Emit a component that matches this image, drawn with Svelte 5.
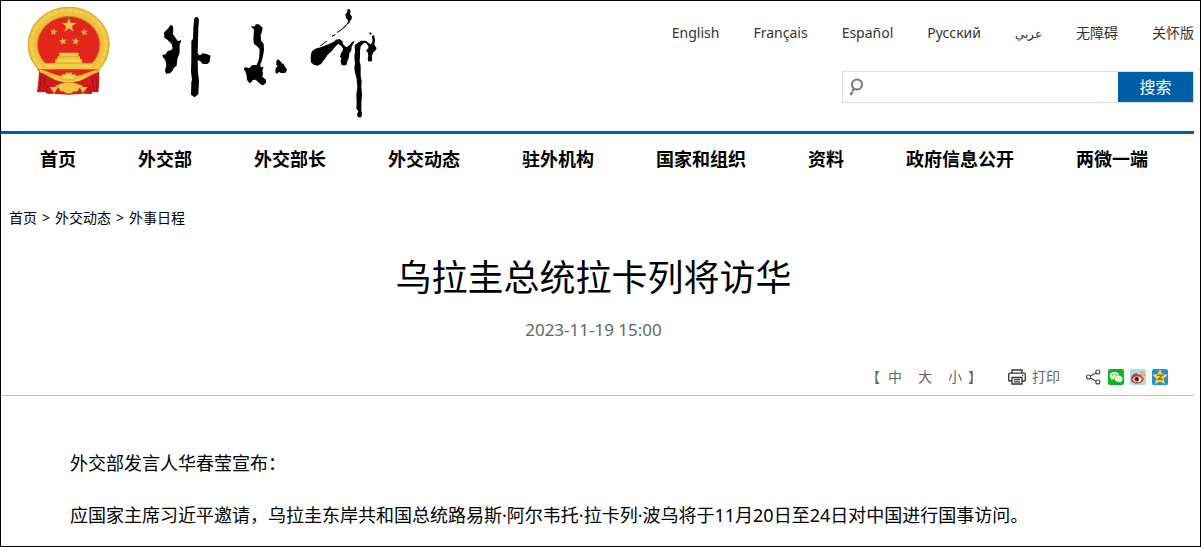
<script>
  const languages = [
    { label: 'English', lang: 'en' },
    { label: 'Français', lang: 'fr' },
    { label: 'Español', lang: 'es' },
    { label: 'Русский', lang: 'ru' },
    { label: 'عربي', lang: 'ar' },
    { label: '无障碍', lang: 'zh' },
    { label: '关怀版', lang: 'zh' }
  ];
  const sections = ['首页', '外交部', '外交部长', '外交动态', '驻外机构', '国家和组织', '资料', '政府信息公开', '两微一端'];
  const trail = ['首页', '外交动态', '外事日程'];
  const sizes = ['中', '大', '小'];
  const star = '0,-10 2.4,-3.2 9.5,-3.1 3.8,1.3 5.9,8.1 0,4 -5.9,8.1 -3.8,1.3 -9.5,-3.1 -2.4,-3.2';
</script>

<div class="page">
  <header>
    <a class="brand" href="#home" aria-label="外交部">
      <svg class="emblem" viewBox="78 18 255 267" aria-hidden="true">
        <path d="M118 205 C120 235 112 258 111 277 L135 276 L143 282 L160 281 L206 284 L250 281 L275 282 L277 276 L295 277 C297 258 299 240 297 205 Z" fill="#d3191b" />
        <path d="M122 225 L119 274 M132 230 L129 274 M145 236 L139 278 M153 240 L151 268 M290 225 L291 274 M280 230 L282 274 M268 236 L271 278 M259 240 L261 268" stroke="#9a1013" stroke-width="3" fill="none" />
        <ellipse cx="206" cy="134" rx="108" ry="99" fill="#e4251c" stroke="#ecbf3d" stroke-width="30" />
        <ellipse cx="206" cy="134" rx="94" ry="85" fill="none" stroke="#c08c2a" stroke-width="3" />
        <ellipse cx="206" cy="134" rx="112" ry="103" fill="none" stroke="#f3cd4c" stroke-width="10" stroke-dasharray="17 3" />
        <ellipse cx="206" cy="134" rx="121" ry="112" fill="none" stroke="#dca934" stroke-width="3" />
        <path d="M112 208 H300 L291 220 L252 246 H160 L121 220 Z" fill="#e4251c" />
        <path d="M118 207 C145 213 166 229 206 231 C246 229 268 213 298 207 L294 221 C270 228 258 244 232 248 L180 248 C154 244 142 228 119 221 Z" fill="#eebf3d" />
        <path d="M117 216 C140 222 153 239 180 243 H232 C259 239 272 222 297 216 L296 262 C274 254 252 252 235 261 L177 261 C160 252 138 254 114 262 Z" fill="#d3191b" />
        <path d="M124 222 L121 258 M136 228 L132 256 M287 222 L290 258 M276 228 L279 256" stroke="#9a1013" stroke-width="3" />
        <path d="M150 226 C169 229 180 243 206 243 C232 243 244 229 264 226 C251 238 239 247 206 248 C174 247 162 238 150 226 Z" fill="#f1ca46" />
        <path d="M183 231 L188 222 L196 224 L200 217 L206 220 L213 217 L217 224 L225 222 L229 231 L218 239 H194 Z" fill="#f5d452" stroke="#c28b22" stroke-width="1.5" />
        <path d="M165 258 C180 253 190 246 206 247 C224 246 233 253 249 258 L238 265 L232 274 L222 274 L214 280 H199 L190 274 L181 274 L177 265 Z" fill="#efc43e" stroke="#c28b22" stroke-width="1.5" />
        <path d="M149 261 L174 262 L163 280 Z M263 261 L239 262 L248 280 Z" fill="#f2c842" />
        <path d="M132 189 H166 V177 H172 V170 L178 167 V158 H235 V167 L240 170 V177 H246 V189 H280 L276 208 H137 Z" fill="#f2c83f" />
        <path d="M175 170 H238 M135 190 H277" stroke="#d39c2c" stroke-width="2" />
        <path d="M178 162 H235 M169 182 H244 M137 198 H275" stroke="#f8dc68" stroke-width="3" />
        <g fill="#f3c744" stroke="#b87a21">
          <polygon points={star} transform="translate(207 76) scale(2.3)" stroke-width=".5" />
          <polygon points={star} transform="translate(161 96) rotate(10) scale(1.15)" stroke-width=".7" />
          <polygon points={star} transform="translate(253 97) rotate(-10) scale(1.15)" stroke-width=".7" />
          <polygon points={star} transform="translate(189 124) rotate(-10) scale(1.2)" stroke-width=".7" />
          <polygon points={star} transform="translate(227 124) rotate(10) scale(1.2)" stroke-width=".7" />
        </g>
      </svg>
      <svg class="brush" viewBox="36 24 648 330" aria-hidden="true">
        <path d="M61 75 L69 78 L70 93 L68 101 L75 111 L83 123 L94 121 L92 128 L89 133 L89 158 L82 176 L80 197 L72 203 L67 213 L60 220 L49 221 L45 214 L46 206 L49 198 L46 180 L38 170 L37 165 L47 163 L53 153 L63 151 L68 145 L65 132 L52 119 L43 113 L42 98 L47 92 L55 85 Z" />
        <path d="M133 55 L137 51 L143 52 L147 59 L145 82 L144 121 L143 158 L147 166 L153 164 L158 160 L172 163 L182 167 L180 174 L179 186 L172 192 L158 192 L151 184 L143 180 L144 218 L147 240 L145 283 L139 287 L134 292 L128 288 L123 284 L124 246 L126 240 L123 215 L124 177 L124 123 L129 116 L130 84 Z" />
        <path d="M303 79 L315 79 L317 73 L327 73 L332 78 L338 83 L336 96 L332 104 L333 122 L341 131 L342 150 L339 168 L335 184 L331 193 L332 201 L341 202 L337 211 L339 220 L337 230 L348 239 L348 248 L341 255 L334 254 L325 247 L317 239 L308 240 L304 247 L298 249 L291 240 L290 229 L287 216 L281 206 L286 202 L298 204 L306 196 L320 195 L325 183 L328 168 L329 148 L323 140 L312 132 L310 119 L312 89 Z" />
        <path d="M384 178 L391 183 L395 190 L400 191 L404 199 L408 204 L411 211 L405 219 L393 219 L388 216 L379 221 L376 217 L377 204 L383 198 L379 194 L379 183 Z" />
        <path d="M592 28 L599 28 L602 34 L600 41 L606 50 L604 59 L600 63 L598 69 L592 73 L587 80 L574 91 L562 99 L561 96 L576 86 L590 72 L595 63 L588 53 L586 43 L592 37 Z M545 108 L555 102 L557 104 L547 111 Z M509 138 L529 122 L531 124 L513 138 Z" />
        <path d="M486 154 L496 146 L514 141 L535 133 L550 126 L558 119 L568 117 L577 123 L579 132 L585 139 L590 142 L598 136 L606 126 L614 122 L609 133 L605 140 L604 152 L598 159 L597 172 L592 184 L589 196 L575 196 L572 184 L574 174 L570 170 L573 159 L578 153 L579 145 L572 136 L565 132 L560 136 L552 145 L545 154 L533 164 L524 178 L513 192 L502 197 L491 194 L483 187 L482 176 L483 162 Z" />
        <path d="M615 154 L614 136 L623 128 L634 122 L647 122 L656 129 L661 133 L666 128 L668 119 L665 109 L672 105 L675 119 L673 134 L680 145 L675 153 L670 157 L666 168 L666 183 L656 185 L653 176 L655 168 L653 157 L648 152 L655 144 L655 138 L648 130 L641 129 L632 139 L630 153 L630 167 L629 184 L632 198 L632 228 L635 244 L634 258 L636 282 L634 308 L634 331 L636 340 L634 352 L624 352 L621 344 L625 333 L619 326 L620 309 L619 282 L622 265 L620 237 L615 218 L613 204 L615 190 L613 171 Z M658 97 L664 98 L664 104 L659 103 Z" />
      </svg>
    </a>
    <div class="tools">
      <ul class="languages">
        {#each languages as item}
          <li><a href="#language" lang={item.lang}>{item.label}</a></li>
        {/each}
      </ul>
      <form class="search" role="search" onsubmit={(event) => event.preventDefault()}>
        <svg viewBox="0 0 16 20" aria-hidden="true">
          <circle cx="9" cy="7.500" r="5" />
          <path d="M5.800 12 L2.600 18" stroke-width="2.400" stroke-dasharray="2.500 .8 5" />
        </svg>
        <input type="search" aria-label="搜索" />
        <button>搜索</button>
      </form>
    </div>
  </header>

  <nav class="sections">
    {#each sections as section}
      <a href="#section">{section}</a>
    {/each}
  </nav>

  <nav class="trail">
    {#each trail as step, i}
      {#if i > 0}<span>&gt;</span>{/if}<a href="#trail">{step}</a>
    {/each}
  </nav>

  <main>
    <div class="heading">
      <h1>乌拉圭总统拉卡列将访华</h1>
      <time datetime="2023-11-19T15:00">2023-11-19 15:00</time>
    </div>

    <div class="actions">
      <div class="sizes">
        <span>【</span>
        {#each sizes as size}
          <button>{size}</button>
        {/each}
        <span>】</span>
      </div>
      <button class="print">
        <svg viewBox="0 0 18 16" aria-hidden="true">
          <path d="M4 4 V1 H14 V4 M4 12 H1.500 Q.7 12 .7 11 V5.500 Q.7 4.200 2 4.200 H16 Q17.300 4.200 17.300 5.500 V11 Q17.300 12 16.500 12 H14 M4 8.500 H14 V15 H4 Z M6 10.700 H12 M6 12.800 H12 M14 6.300 H15.200" />
        </svg>
        打印
      </button>
      <div class="share">
        <svg class="nodes" viewBox="0 0 16 16" aria-hidden="true">
          <path d="M4.500 7 L10 3.800 M4.500 9 L10 12.200" />
          <circle cx="2.600" cy="8" r="2" /><circle cx="11.800" cy="3" r="2" /><circle cx="11.800" cy="13" r="2" />
        </svg>
        <a href="#wechat" aria-label="微信">
          <svg viewBox="0 0 16 16">
            <rect width="16" height="16" rx="2" fill="#10b51b" />
            <path d="M6.500 3 C3.700 3 1.700 4.700 1.700 6.800 C1.700 8 2.400 9 3.400 9.700 L3 11.200 L4.800 10.300 L6.500 10.600 C9.200 10.600 11.200 8.900 11.200 6.800 C11.200 4.700 9.200 3 6.500 3 Z" fill="#e9f8e7" />
            <path d="M10.700 6.500 C8.300 6.500 6.600 8 6.600 9.900 C6.600 11.800 8.300 13.200 10.700 13.200 L12 13 L13.600 13.800 L13.200 12.500 C14.100 11.900 14.700 11 14.700 9.900 C14.700 8 13 6.500 10.700 6.500 Z" fill="#fff" stroke="#10b51b" stroke-width=".5" />
            <g fill="#229926"><circle cx="4.900" cy="5.800" r=".7" /><circle cx="8" cy="5.800" r=".7" /><circle cx="9.300" cy="9" r=".6" /><circle cx="12" cy="9" r=".6" /></g>
          </svg>
        </a>
        <a href="#weibo" aria-label="微博">
          <svg viewBox="0 0 16 16">
            <rect width="16" height="16" rx="2" fill="#a5def0" />
            <path d="M1 10 C1 6.500 4.500 3.800 6.800 4.200 C8 4.500 7.900 5.500 7.700 6 C9.500 5.200 11.700 5.500 11.500 7.200 C13.500 8 14 9.200 13.500 10.700 C12.700 13.500 9.700 14.500 7 14.500 C3.500 14.500 1 12.800 1 10 Z" fill="#e23a20" />
            <ellipse cx="7.200" cy="10.200" rx="4.300" ry="2.800" fill="#fff" />
            <circle cx="6.700" cy="10.300" r="2.200" fill="#171717" /><circle cx="6" cy="11" r=".6" fill="#fff" />
            <path d="M10.500 2.800 C13.200 2.300 15.200 4.700 14.400 7.200 M10.800 5 C12 4.800 12.800 5.700 12.400 6.900" fill="none" stroke="#f6a52a" stroke-width="1.300" />
          </svg>
        </a>
        <a href="#qzone" aria-label="QQ空间">
          <svg viewBox="0 0 16 16">
            <rect width="16" height="16" rx="2" fill="#1b91e0" />
            <polygon points="8,.3 10.400,5 15.700,5.800 11.900,9.600 12.900,15.200 8,12.600 3.100,15.200 4.100,9.600 .3,5.800 5.600,5" fill="#fbd447" />
            <path d="M5 6.200 H10.500 L6 10.300 H11.200" fill="none" stroke="#a8670f" stroke-width="1.400" />
          </svg>
        </a>
      </div>
    </div>

    <article>
      <p>外交部发言人华春莹宣布：</p>
      <p>应国家主席习近平邀请，乌拉圭东岸共和国总统路易斯·阿尔韦托·拉卡列·波乌将于11月20日至24日对中国进行国事访问。</p>
    </article>
  </main>
</div>

<style>
  .page {
    box-sizing: border-box;
    min-height: 100vh;
    padding-right: 6px;
    border: 1px solid #000;
    background: #fff;
    color: #000;
    font-family: "Noto Sans", "Noto Sans CJK SC", sans-serif;
    font-size: 14px;
    line-height: 20px;
  }
  a { color: inherit; text-decoration: none; }
  svg { display: block; flex: none; }
  button {
    padding: 0;
    border: 0;
    background: none;
    color: inherit;
    font: inherit;
    cursor: pointer;
  }
  header {
    display: flex;
    justify-content: space-between;
    height: 130px;
    border-bottom: 3px solid #005ea7;
  }
  .brand { display: flex; align-items: flex-start; gap: 51px; padding: 5px 0 0 25px; }
  .emblem { width: 85px; height: 89px; }
  .brush { width: 216px; height: 110px; margin-top: 2px; }
  .tools { display: flex; flex-direction: column; align-items: flex-end; gap: 27px; padding-top: 22px; }
  .languages {
    display: flex;
    gap: 34px;
    margin: 0;
    padding: 0;
    list-style: none;
    color: #333;
  }
  .languages a:lang(ar) { font-size: 12px; }
  .search {
    display: flex;
    align-items: center;
    box-sizing: border-box;
    width: 352px;
    height: 32px;
    border: 1px solid #ddd;
  }
  .search svg {
    width: 16px;
    height: 20px;
    margin-left: 5px;
    fill: none;
    stroke: #777;
    stroke-width: 2;
  }
  .search input {
    flex: 1;
    min-width: 0;
    height: 28px;
    padding: 0 6px;
    border: 0;
    outline: 0;
    background: none;
    font: inherit;
  }
  .search button {
    width: 75px;
    height: 30px;
    background: #005ea7;
    color: #fff;
    font-size: 16px;
  }
  .sections {
    display: flex;
    gap: 62px;
    padding: 12px 0 12px 39px;
    font-size: 18px;
    font-weight: 700;
    line-height: 26px;
    white-space: nowrap;
  }
  .trail { display: flex; gap: 5px; padding: 24px 8px 0; }
  .heading { padding: 28px 8px 0 0; text-align: center; }
  h1 {
    margin: 0;
    font-size: 36px;
    font-weight: 400;
    line-height: 44px;
  }
  time {
    display: block;
    margin-top: 18px;
    color: #666;
    font-size: 17px;
    line-height: 24px;
  }
  .actions {
    display: flex;
    justify-content: flex-end;
    align-items: center;
    height: 37px;
    margin-top: 16px;
    padding-right: 26px;
    border-bottom: 1px solid #99c8ff;
    color: #666;
  }
  .sizes { display: flex; gap: 16px; }
  .sizes span:first-child { margin-right: -8px; }
  .sizes span:last-child { margin-left: -10px; }
  .print { display: flex; align-items: center; gap: 6px; margin-left: 26px; }
  .print svg { width: 18px; height: 16px; fill: none; stroke: #333; stroke-width: 1.3; }
  .share { display: flex; align-items: center; gap: 6px; margin-left: 26px; }
  .share svg { width: 16px; height: 16px; }
  .share .nodes { fill: none; stroke: #444; stroke-width: 1.1; }
  article { padding: 41px 69px 0; font-size: 18px; }
  article p { margin: 0; line-height: 52px; }
</style>
